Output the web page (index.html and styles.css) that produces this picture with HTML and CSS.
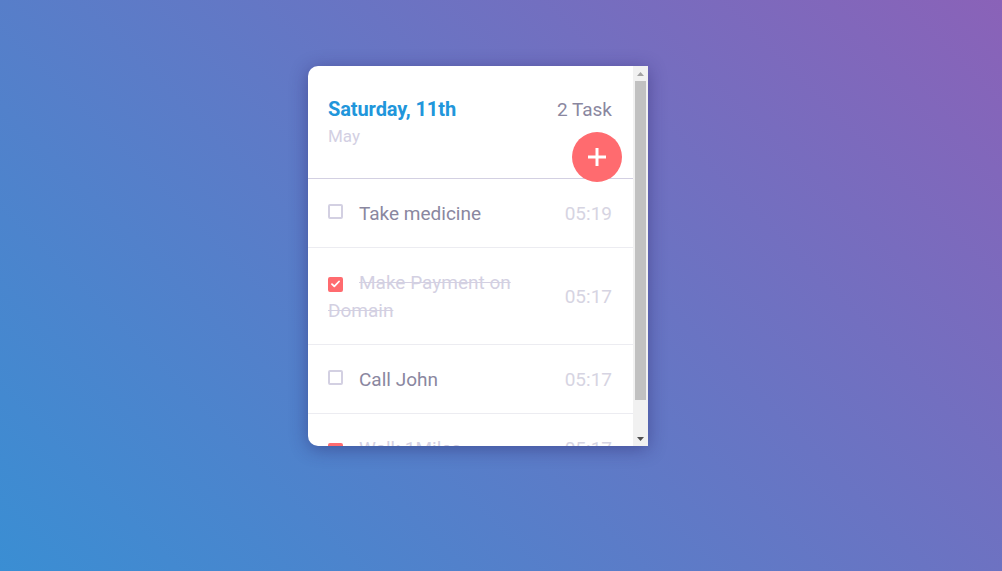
FILE: index.html
```html
<!DOCTYPE html>
<html>
<head>
<meta charset="utf-8">
<link rel="stylesheet" href="styles.css">
</head>
<body>
<div class="card">
  <div class="content">
    <header class="head">
      <div class="head-row">
        <div class="date">Saturday, 11th</div>
        <div class="count">2 Task</div>
      </div>
      <div class="month">May</div>
      <button class="add" type="button" aria-label="Add task">
        <svg width="20" height="20" viewBox="0 0 20 20"><path d="M10 1v18M1 10h18" stroke="#fff" stroke-width="3" fill="none"/></svg>
      </button>
    </header>
    <ul class="list">
      <li class="item">
        <div class="label"><span class="box"></span>Take medicine</div>
        <div class="time">05:19</div>
      </li>
      <li class="item done">
        <div class="label"><span class="box"><svg width="9" height="8" viewBox="0 0 9 8"><path d="M1 4.2l2.3 2.2L8 1.5" stroke="#fff" stroke-width="1.8" fill="none" stroke-linecap="round" stroke-linejoin="round"/></svg></span>Make Payment on Domain</div>
        <div class="time">05:17</div>
      </li>
      <li class="item">
        <div class="label"><span class="box"></span>Call John</div>
        <div class="time">05:17</div>
      </li>
      <li class="item done">
        <div class="label"><span class="box"><svg width="9" height="8" viewBox="0 0 9 8"><path d="M1 4.2l2.3 2.2L8 1.5" stroke="#fff" stroke-width="1.8" fill="none" stroke-linecap="round" stroke-linejoin="round"/></svg></span>Walk 1Miles</div>
        <div class="time">05:17</div>
      </li>
    </ul>
  </div>
  <div class="scrollbar">
    <div class="arrow"><svg width="7" height="4" viewBox="0 0 7 4"><path d="M3.5 0L7 4H0z" fill="#a3a3a3"/></svg></div>
    <div class="track"><div class="thumb"></div></div>
    <div class="arrow"><svg width="7" height="4" viewBox="0 0 7 4"><path d="M0 0h7L3.5 4z" fill="#505050"/></svg></div>
  </div>
</div>
</body>
</html>
```

FILE: styles.css
```css
html, body {
  margin: 0;
  height: 100%;
}
body {
  background: linear-gradient(45deg, #3a8ed3 0%, #8a62b8 100%);
  font-family: Roboto, "Liberation Sans", sans-serif;
  overflow: hidden;
}
.card {
  display: flex;
  width: 340px;
  height: 380px;
  margin: 66px 0 0 308px;
  background: #fff;
  border-radius: 10px 0 0 10px;
  box-shadow: 0 3px 18px rgba(40, 30, 100, 0.45);
  overflow: hidden;
}
.content {
  flex: 1;
  min-width: 0;
  overflow: hidden;
}
.scrollbar {
  width: 15px;
  display: flex;
  flex-direction: column;
  background: #f1f1f1;
}
.arrow {
  height: 15px;
  display: flex;
  align-items: center;
  justify-content: center;
}
.track {
  flex: 1;
}
.thumb {
  height: 319px;
  margin: 0 2px;
  background: #c1c1c1;
}
.head {
  position: relative;
  padding: 31px 21px 0 20px;
  height: 81px;
  border-bottom: 1px solid #d3d0e2;
}
.head-row {
  display: flex;
  justify-content: space-between;
  align-items: baseline;
}
.date {
  font-size: 20px;
  font-weight: 700;
  color: #2196db;
  letter-spacing: -0.1px;
}
.count {
  font-size: 19px;
  color: #8a87a0;
}
.month {
  margin-top: 5px;
  font-size: 17px;
  color: #d3d0e3;
}
.add {
  position: absolute;
  right: 11px;
  bottom: -4px;
  width: 50px;
  height: 50px;
  border: 0;
  border-radius: 50%;
  background: #ff6b6f;
  padding: 0;
  display: flex;
  align-items: center;
  justify-content: center;
  z-index: 1;
}
.list {
  list-style: none;
  margin: 0;
  padding: 0;
}
.item {
  display: flex;
  align-items: center;
  padding: 21px 21px 19px 20px;
  border-bottom: 1px solid #ececf1;
  font-size: 19px;
  line-height: 28px;
}
.label {
  flex: 1;
  margin-right: 22px;
  color: #8a87a0;
}
.box {
  display: inline-flex;
  align-items: center;
  justify-content: center;
  box-sizing: border-box;
  width: 15px;
  height: 15px;
  border: 2px solid #d3d0e2;
  border-radius: 2px;
  margin-right: 16px;
  vertical-align: 1px;
}
.done .label {
  color: #d3d0e2;
  text-decoration: line-through;
}
.done .box {
  background: #ff6b6f;
  border-color: #ff6b6f;
}
.time {
  color: #d6d4e2;
}
```
